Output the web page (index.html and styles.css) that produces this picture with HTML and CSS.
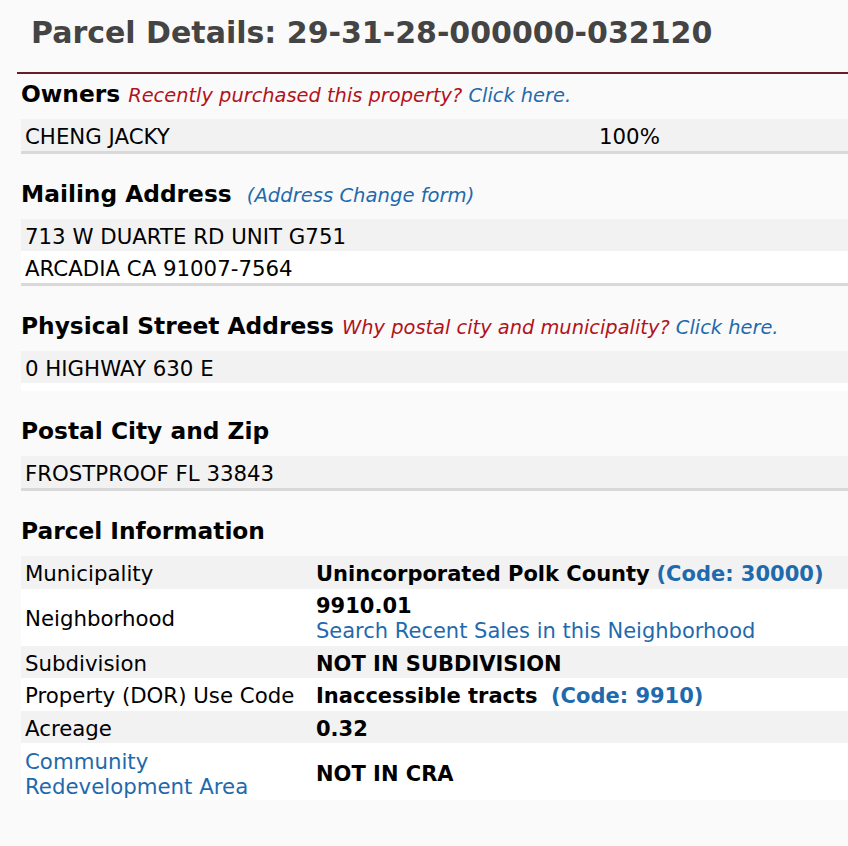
FILE: index.html
```html
<!DOCTYPE html>
<html>
<head>
    <title>Parcel Details</title>
    <link rel="stylesheet" href="styles.css">
</head>
<body>

    <h1 class="page-title">Parcel Details: 29-31-28-000000-032120</h1>

    <div class="parcel">
        <!-- Owners -->
        <h3>Owners <span class="note">Recently purchased this property? <a href="#">Click here.</a></span></h3>
        <table class="info ruled">
            <tr class="shade">
                <td class="owner-name">CHENG JACKY</td>
                <td>100%</td>
            </tr>
        </table>

        <!-- Mailing address -->
        <h3>Mailing Address <a href="#" class="note-link">(Address Change form)</a></h3>
        <table class="info ruled">
            <tr class="shade"><td>713 W DUARTE RD UNIT G751</td></tr>
            <tr class="plain"><td>ARCADIA CA 91007-7564</td></tr>
        </table>

        <!-- Physical address -->
        <h3>Physical Street Address <span class="note">Why postal city and municipality? <a href="#">Click here.</a></span></h3>
        <table class="info padded">
            <tr class="shade"><td>0 HIGHWAY 630 E</td></tr>
        </table>

        <!-- Postal city -->
        <h3>Postal City and Zip</h3>
        <table class="info ruled">
            <tr class="shade"><td>FROSTPROOF FL 33843</td></tr>
        </table>

        <!-- Parcel information -->
        <h3>Parcel Information</h3>
        <table class="info details">
            <tr class="shade">
                <td class="label">Municipality</td>
                <td><strong>Unincorporated Polk County</strong> <a href="#" class="code">(Code: 30000)</a></td>
            </tr>
            <tr class="plain">
                <td class="label">Neighborhood</td>
                <td class="stack"><strong>9910.01</strong><br><a href="#">Search Recent Sales in this Neighborhood</a></td>
            </tr>
            <tr class="shade">
                <td class="label">Subdivision</td>
                <td><strong>NOT IN SUBDIVISION</strong></td>
            </tr>
            <tr class="plain">
                <td class="label">Property (DOR) Use Code</td>
                <td><strong>Inaccessible tracts</strong>&nbsp; <a href="#" class="code">(Code: 9910)</a></td>
            </tr>
            <tr class="shade">
                <td class="label">Acreage</td>
                <td><strong>0.32</strong></td>
            </tr>
            <tr class="plain">
                <td class="label stack"><a href="#">Community<br>Redevelopment Area</a></td>
                <td><strong>NOT IN CRA</strong></td>
            </tr>
        </table>
    </div>

</body>
</html>
```

FILE: styles.css
```css
/* Parcel details page */
body {
    font-family: "DejaVu Sans", Verdana, sans-serif;
    background-color: #fafafa;
    color: #000;
    margin: 0;
    padding: 0;
}

a {
    color: #1f6aad;
    text-decoration: none;
}

.page-title {
    font-size: 30px;
    line-height: 36px;
    color: #444;
    margin: 0;
    padding: 15px 0 0 31px;
    height: 72px;
    box-sizing: border-box;
}

.parcel {
    margin-left: 17px;
    padding-left: 4px;
    border-top: 2px solid #6b1d27;
}

h3 {
    font-size: 23.3px;
    margin: 0;
    height: 45px;
    line-height: 40px;
    white-space: nowrap;
}

.note {
    font-size: 19.4px;
    font-weight: normal;
    font-style: italic;
    color: #b3121b;
}

.note-link {
    font-size: 19.6px;
    font-weight: normal;
    font-style: italic;
    margin-left: 7px;
}

/* data tables */
.info {
    width: 100%;
    border-collapse: collapse;
    font-size: 21.3px;
    margin-bottom: 20px;
}

.info td {
    padding: 4px 4px 0;
    height: 28px;
    line-height: 24px;
    white-space: nowrap;
}

.shade {
    background-color: #f2f2f2;
}

.plain {
    background-color: #fff;
}

.ruled {
    border-bottom: 3px solid #d9d9d9;
}

.padded {
    border-bottom: 8px solid #fff;
}

.owner-name {
    width: 566px;
}

.details {
    font-size: 21px;
}

.details .label {
    width: 283px;
    font-size: 21.3px;
}

.details td {
    height: 28.5px;
}

.details .stack {
    height: 53px;
    line-height: 25px;
}

.code {
    font-weight: bold;
}
```
